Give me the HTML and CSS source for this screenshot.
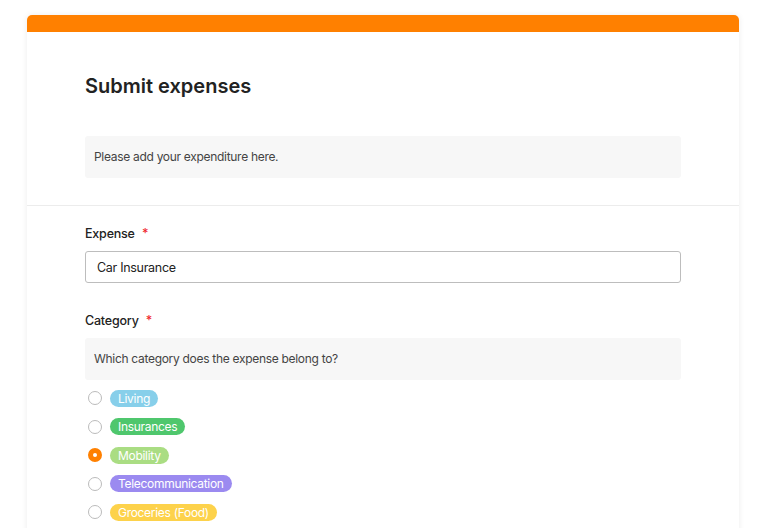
FILE: index.html
```html
<!DOCTYPE html>
<html lang="en">
<head>
    <meta charset="UTF-8">
    <meta name="viewport" content="width=device-width, initial-scale=1.0">
    <title>Submit expenses</title>
    <link rel="stylesheet" href="styles.css">
</head>
<body>

    <div class="card">
        <div class="card-bar"></div>

        <div class="card-header">
            <h1>Submit expenses</h1>
            <div class="note">Please add your expenditure here.</div>
        </div>

        <form class="card-body">
            <div class="field">
                <label for="expense">Expense <span class="req">*</span></label>
                <input type="text" id="expense" name="expense" value="Car Insurance">
            </div>

            <div class="field">
                <label>Category <span class="req">*</span></label>
                <div class="note">Which category does the expense belong to?</div>
                <div class="options">
                    <div class="option"><span class="radio"></span><span class="tag living">Living</span></div>
                    <div class="option"><span class="radio"></span><span class="tag insurances">Insurances</span></div>
                    <div class="option"><span class="radio checked"></span><span class="tag mobility">Mobility</span></div>
                    <div class="option"><span class="radio"></span><span class="tag telecom">Telecommunication</span></div>
                    <div class="option"><span class="radio"></span><span class="tag groceries">Groceries (Food)</span></div>
                </div>
            </div>
        </form>
    </div>

</body>
</html>
```

FILE: styles.css
```css
body {
    font-family: Inter, "Noto Sans", Arial, sans-serif;
    margin: 0;
    padding: 0;
    background-color: #ffffff;
    color: #222;
}

.card {
    width: 712px;
    margin: 15px 0 0 27px;
    background-color: #fff;
    border-radius: 5px;
    box-shadow: 0 0 6px rgba(0, 0, 0, 0.08);
    overflow: hidden;
    min-height: 600px;
}

.card-bar {
    height: 17px;
    background-color: #ff8000;
}

.card-header {
    padding: 40px 58px 27px;
    border-bottom: 1px solid #ececec;
}

h1 {
    margin: 0 0 36px;
    font-size: 20px;
    line-height: 28px;
    font-weight: 600;
    color: #222;
}

.note {
    background-color: #f7f7f7;
    border-radius: 3px;
    padding: 0 9px;
    height: 42px;
    line-height: 42px;
    font-size: 12px;
    letter-spacing: -0.3px;
    color: #444;
}

.card-body {
    padding: 19px 58px 0;
}

.field {
    margin-bottom: 29px;
}

label {
    display: block;
    font-size: 12.5px;
    line-height: 18px;
    font-weight: 500;
    letter-spacing: -0.2px;
    color: #222;
    margin-bottom: 8px;
}

.req {
    color: #f0262e;
    margin-left: 4px;
}

input[type="text"] {
    display: block;
    width: 100%;
    height: 32px;
    box-sizing: border-box;
    border: 1px solid #bdbdbd;
    border-radius: 3px;
    padding: 0 11px;
    font-family: inherit;
    font-size: 12.5px;
    letter-spacing: -0.3px;
    color: #222;
}

.options {
    display: flex;
    flex-direction: column;
    gap: 8.5px;
    margin-top: 8px;
}

.option {
    display: flex;
    align-items: center;
    height: 20px;
}

.radio {
    width: 14px;
    height: 14px;
    box-sizing: border-box;
    border: 1px solid #bbb;
    border-radius: 50%;
    margin-left: 3px;
    margin-right: 8px;
    background: #fff;
}

.radio.checked {
    border: 5px solid #ff8000;
}

.tag {
    display: inline-block;
    height: 17px;
    line-height: 17px;
    padding: 0 8px;
    border-radius: 9px;
    font-size: 12px;
    letter-spacing: -0.3px;
    color: #fff;
}

.living { background-color: #87cfea; }
.insurances { background-color: #4fc76d; }
.mobility { background-color: #aadd83; }
.telecom { background-color: #9b8af0; }
.groceries { background-color: #fdd24b; }
```
